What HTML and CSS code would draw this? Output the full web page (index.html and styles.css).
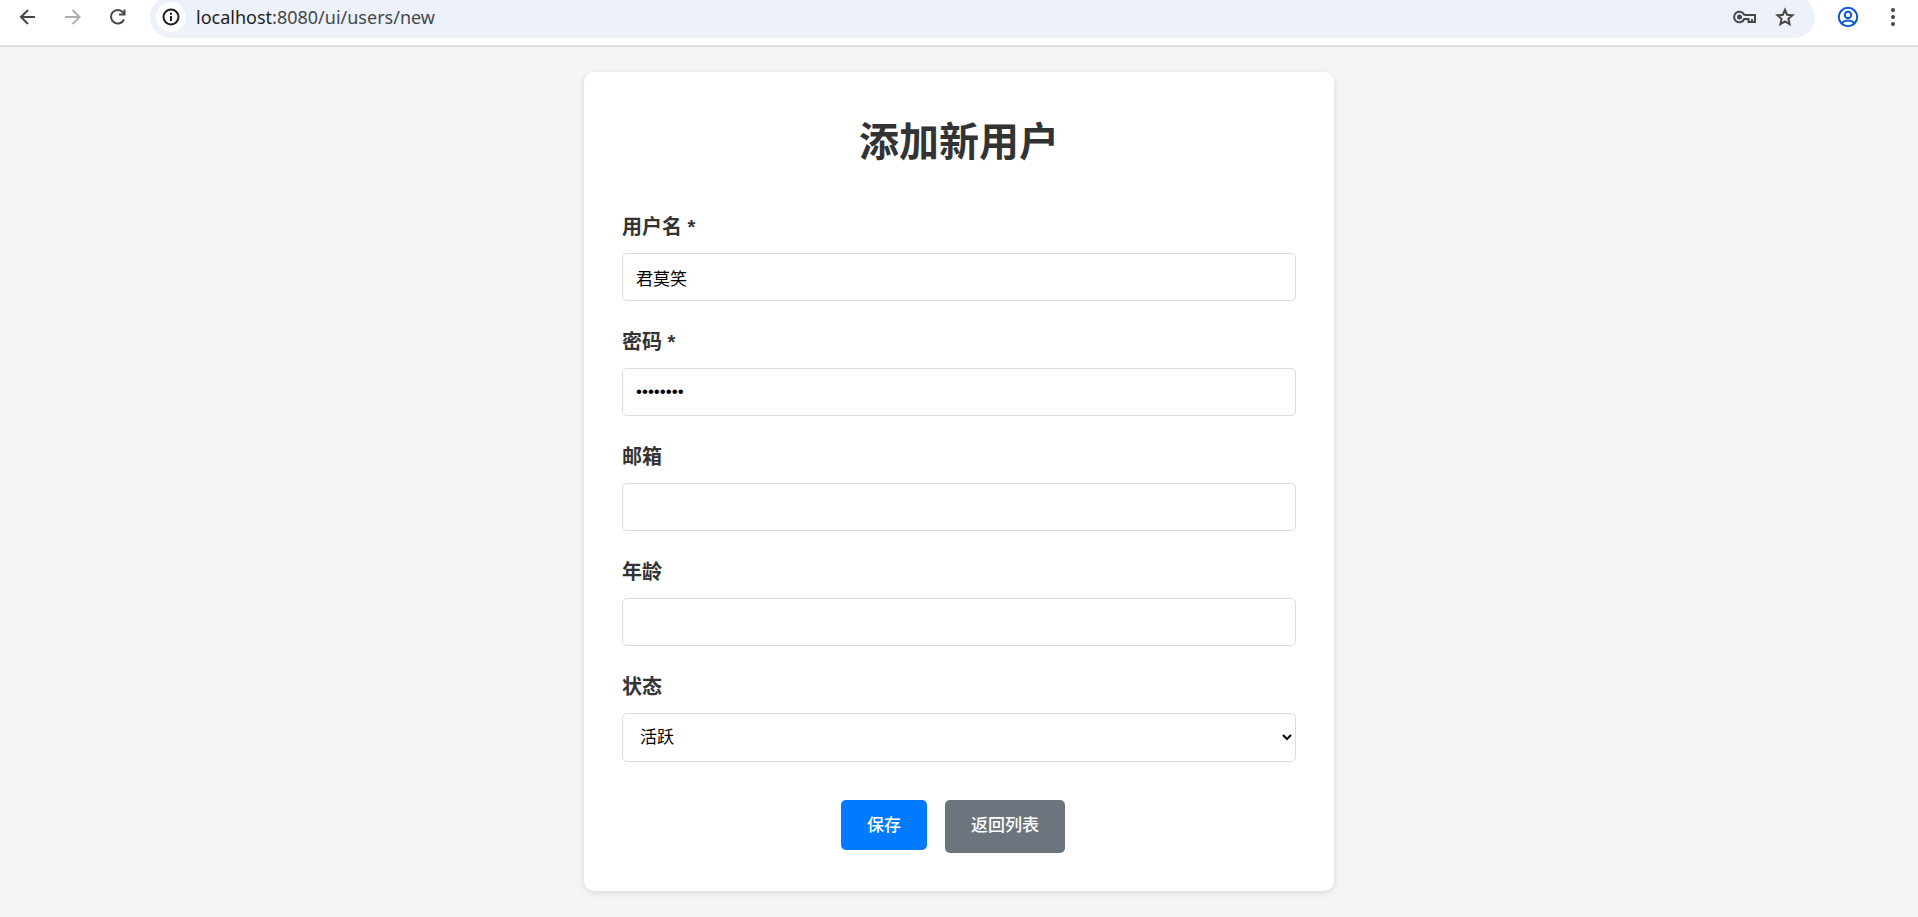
FILE: index.html
```html
<!DOCTYPE html>
<html lang="zh-CN">
<head>
<meta charset="utf-8">
<title>添加新用户</title>
<link rel="stylesheet" href="styles.css">
</head>
<body>
<header class="toolbar">
  <button class="tool" type="button" aria-label="后退"><svg width="20" height="20" viewBox="0 0 20 20"><path d="M17 10H3.500M10 3L3 10l7 7"/></svg></button>
  <button class="tool tool-disabled" type="button" aria-label="前进"><svg width="20" height="20" viewBox="0 0 20 20"><path d="M2 10h14.500M9.500 3l7 7-7 7"/></svg></button>
  <button class="tool" type="button" aria-label="重新加载"><svg width="20" height="20" viewBox="0 0 20 20"><path d="M16 12.500A6.800 6.800 0 1 1 15 5.300L16.500 7M16.500 2.500V7.500H11"/></svg></button>
  <div class="address">
    <button class="site-info" type="button" aria-label="网站信息"><svg width="18" height="18" viewBox="0 0 18 18"><circle cx="9" cy="9" r="7.500"/><path d="M9 8v5M9 4.800v1.900"/></svg></button>
    <div class="url"><span class="host">localhost</span>:8080/ui/users/new</div>
    <button class="tool tool-small" type="button" aria-label="密码"><svg width="24" height="16" viewBox="0 0 24 16"><path d="M11.300 6A5.300 5.300 0 1 0 11.300 10H15.500v3h6.500V6H11.300M19 13v-3"/><circle class="dot" cx="6.500" cy="8" r="2.500"/></svg></button>
    <button class="tool tool-small" type="button" aria-label="添加书签"><svg width="20" height="20" viewBox="0 0 20 20"><path d="M10 2.800l2.100 4.900 5.400.5-4.100 3.600 1.200 5.300-4.600-2.800-4.600 2.800 1.200-5.300-4.100-3.600 5.400-.5z"/></svg></button>
  </div>
  <button class="tool tool-profile" type="button" aria-label="个人资料"><svg width="22" height="22" viewBox="0 0 22 22"><circle cx="11" cy="11" r="9.200"/><circle cx="11" cy="9" r="3.200"/><path d="M4.500 17c3.500-3.300 9.500-3.300 13 0"/></svg></button>
  <button class="tool tool-menu" type="button" aria-label="菜单"><svg width="20" height="20" viewBox="0 0 20 20"><circle class="dot" cx="10" cy="3" r="2"/><circle class="dot" cx="10" cy="10" r="2"/><circle class="dot" cx="10" cy="17" r="2"/></svg></button>
</header>
<main class="card">
  <h1 class="title">添加新用户</h1>
  <form class="form">
    <div class="field">
      <label class="label" for="username">用户名 *</label>
      <input class="control" id="username" type="text" value="君莫笑">
    </div>
    <div class="field">
      <label class="label" for="password">密码 *</label>
      <input class="control" id="password" type="password" value="password">
    </div>
    <div class="field">
      <label class="label" for="email">邮箱</label>
      <input class="control" id="email" type="email">
    </div>
    <div class="field">
      <label class="label" for="age">年龄</label>
      <input class="control" id="age" type="number">
    </div>
    <div class="field">
      <label class="label" for="status">状态</label>
      <select class="control control-select" id="status"><option>活跃</option></select>
    </div>
    <div class="actions">
      <button class="btn btn-primary" type="submit">保存</button>
      <a class="btn btn-secondary" href="#">返回列表</a>
    </div>
  </form>
</main>
</body>
</html>
```
FILE: styles.css
```css
* { box-sizing: border-box; }
body {
  margin: 0;
  background: #f5f5f5;
  color: #333;
  font-family: "Liberation Sans", "Noto Sans CJK SC", sans-serif;
}
.toolbar {
  display: flex;
  align-items: flex-start;
  height: 47px;
  padding: 0 10px 0 13px;
  overflow: hidden;
  background: #fff;
  border-bottom: 2px solid #dfdfdf;
}
.tool, .site-info {
  display: flex;
  flex: none;
  align-items: center;
  justify-content: center;
  border: 0;
  padding: 0;
  background: none;
  color: #474747;
}
.tool { width: 30px; height: 34px; margin-right: 15px; }
.tool svg, .site-info svg {
  fill: none;
  stroke: currentColor;
  stroke-width: 2;
}
svg .dot { fill: currentColor; stroke: none; }
.tool-disabled { color: #adadad; }
.address {
  display: flex;
  flex: 1;
  align-items: center;
  height: 42px;
  margin-top: -4px;
  margin-left: 2px;
  padding: 0 14px 0 6px;
  border-radius: 21px;
  background: #ecf1fa;
}
.site-info {
  width: 30px;
  height: 30px;
  border-radius: 50%;
  background: #fff;
  color: #1f1f1f;
}
.url {
  flex: 1;
  margin-left: 10px;
  font-family: "Noto Sans", sans-serif;
  font-size: 18px;
  line-height: 24px;
  color: #474747;
}
.host { color: #1f1f1f; }
.tool-small { width: 32px; margin-right: 0; margin-left: 8px; }
.tool-profile { margin: 0 15px 0 18px; color: #0b57d0; }
.tool-menu { margin-right: 0; margin-left: 0; }
.card {
  max-width: 750px;
  margin: 25px auto;
  padding: 38px;
  border-radius: 10px;
  background: #fff;
  box-shadow: 0 2px 6px rgba(0, 0, 0, 0.12);
}
.title {
  margin: 0 0 37px;
  font-size: 40px;
  line-height: 64px;
  text-align: center;
}
.field { margin-bottom: 25px; }
.label {
  display: block;
  margin-bottom: 10px;
  font-size: 20px;
  font-weight: bold;
  line-height: 32px;
}
.control {
  display: block;
  width: 100%;
  height: 48px;
  padding: 0 13px;
  border: 1px solid #ddd;
  border-radius: 5px;
  background: #fff;
  color: #000;
  font-family: inherit;
  font-size: 17px;
}
.control-select { height: 49px; }
.actions {
  display: flex;
  align-items: flex-start;
  justify-content: center;
  gap: 18px;
  margin-top: 38px;
  padding-right: 12px;
}
.btn {
  border: 0;
  border-radius: 5px;
  padding: 2px 26px 0;
  color: #fff;
  font-family: inherit;
  font-size: 17px;
  font-weight: 500;
  line-height: 48px;
  text-decoration: none;
}
.btn-primary { background: #007bff; }
.btn-secondary { padding-bottom: 3px; background: #6c757d; }
```
